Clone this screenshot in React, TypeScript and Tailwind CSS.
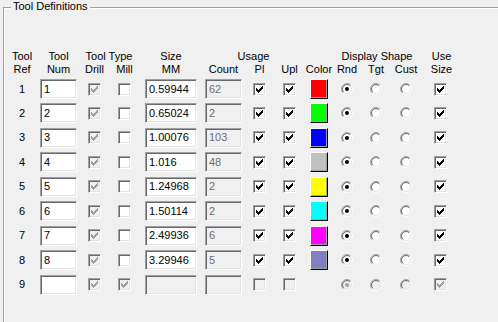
import React from "react";

// Win classic "Tool Definitions" group box

type Tool = {
  ref: number;
  num: string;
  size: string;
  count: string;
  color: string | null;
};

const tools: Tool[] = [
  { ref: 1, num: "1", size: "0.59944", count: "62", color: "#ff0000" },
  { ref: 2, num: "2", size: "0.65024", count: "2", color: "#00ff00" },
  { ref: 3, num: "3", size: "1.00076", count: "103", color: "#0000ff" },
  { ref: 4, num: "4", size: "1.016", count: "48", color: "#c0c0c0" },
  { ref: 5, num: "5", size: "1.24968", count: "2", color: "#ffff00" },
  { ref: 6, num: "6", size: "1.50114", count: "2", color: "#00ffff" },
  { ref: 7, num: "7", size: "2.49936", count: "6", color: "#ff00ff" },
  { ref: 8, num: "8", size: "3.29946", count: "5", color: "#8080c0" },
  { ref: 9, num: "", size: "", count: "", color: null },
];

// column widths in px, measured from the group's inner left edge
const cols = "grid-cols-[36px_37px_35px_25px_68px_37px_35px_25px_34px_22px_36px_24px_44px]";

const sunken =
  "border border-[#a0a0a0] border-b-white border-r-white shadow-[inset_1px_1px_0_#696969,inset_-1px_-1px_0_#e3e3e3]";

function TextBox({
  value,
  width,
  disabled,
}: {
  value: string;
  width: string;
  disabled?: boolean;
}) {
  return (
    <div
      className={`${width} h-[20px] ${sunken} ${
        disabled ? "bg-[#f0f0f0] text-[#6d6d6d]" : "bg-white text-black"
      } flex items-center pl-[3px] leading-[13px]`}
    >
      {value}
    </div>
  );
}

// pixel runs of the classic 7x7 check glyph: [row, start, length]
const checkRuns: [number, number, number][] = [
  [0, 6, 1],
  [1, 5, 2],
  [2, 0, 1],
  [2, 4, 3],
  [3, 0, 2],
  [3, 3, 3],
  [4, 0, 5],
  [5, 1, 3],
  [6, 2, 1],
];

function CheckBox({ checked, disabled }: { checked: boolean; disabled?: boolean }) {
  return (
    <div
      className={`w-[13px] h-[13px] ${sunken} ${
        disabled ? "bg-[#f0f0f0]" : "bg-white"
      } flex items-center justify-center`}
    >
      {checked && (
        <svg width="7" height="7" viewBox="0 0 7 7" shapeRendering="crispEdges">
          {checkRuns.map(([y, x, w], i) => (
            <rect key={i} x={x} y={y} width={w} height={1} fill={disabled ? "#a0a0a0" : "#000"} />
          ))}
        </svg>
      )}
    </div>
  );
}

function arc(r: number, from: "tl" | "br") {
  const d = r * 0.7071;
  const bl = `${6 - d} ${6 + d}`;
  const tr = `${6 + d} ${6 - d}`;
  return from === "tl" ? `M${bl} A${r} ${r} 0 0 1 ${tr}` : `M${tr} A${r} ${r} 0 0 1 ${bl}`;
}

function Radio({ selected, disabled }: { selected: boolean; disabled?: boolean }) {
  return (
    <svg width="12" height="12" viewBox="0 0 12 12">
      <circle cx="6" cy="6" r="5" fill={disabled ? "#f0f0f0" : "#fff"} />
      <path d={arc(5.5, "tl")} stroke="#a0a0a0" fill="none" />
      <path d={arc(4.5, "tl")} stroke="#696969" fill="none" />
      <path d={arc(5.5, "br")} stroke="#fff" fill="none" />
      <path d={arc(4.5, "br")} stroke="#e3e3e3" fill="none" />
      {selected && <circle cx="6" cy="6" r="2" fill={disabled ? "#a0a0a0" : "#000"} />}
    </svg>
  );
}

function Swatch({ color }: { color: string }) {
  return (
    <div
      className="w-[18px] h-[20px] border border-white border-b-black border-r-black shadow-[inset_-1px_-1px_0_#a0a0a0]"
      style={{ backgroundColor: color }}
    />
  );
}

export default function App() {
  return (
    <div
      className="w-[498px] h-[322px] overflow-hidden bg-[#f0f0f0] pt-[7px] pl-[3px] text-[11px] leading-[13px] text-black"
      style={{ fontFamily: '"Liberation Sans", Arial, sans-serif' }}
    >
      <div className="relative w-[540px] h-[360px] border border-[#a0a0a0] shadow-[inset_1px_1px_0_#fff]">
        <span className="absolute -top-[8px] left-[7px] px-[2px] bg-[#f0f0f0]">Tool Definitions</span>

        {/* column headers */}
        <div className={`grid ${cols} mt-[42px] text-center`}>
          <span>Tool</span>
          <span>Tool</span>
          <span className="col-span-2 pl-[4px]">Tool Type</span>
          <span>Size</span>
          <span className="col-span-3">Usage</span>
          <span />
          <span className="col-span-3">Display Shape</span>
          <span className="pl-[3px]">Use</span>

          <span>Ref</span>
          <span>Num</span>
          <span>Drill</span>
          <span>Mill</span>
          <span>MM</span>
          <span>Count</span>
          <span>Pl</span>
          <span>Upl</span>
          <span>Color</span>
          <span>Rnd</span>
          <span>Tgt</span>
          <span>Cust</span>
          <span className="pl-[3px]">Size</span>
        </div>

        {/* tool rows */}
        <div className={`grid ${cols} auto-rows-[20px] gap-y-[4.45px] mt-[3px] items-center justify-items-center`}>
          {tools.map((t) => {
            const empty = t.color === null;
            return (
              <React.Fragment key={t.ref}>
                <span>{t.ref}</span>
                <TextBox value={t.num} width="w-[37px]" />
                <CheckBox checked disabled />
                <CheckBox checked={empty} disabled={empty} />
                <TextBox value={t.size} width="w-[52px]" disabled={empty} />
                <TextBox value={t.count} width="w-[37px]" disabled />
                <CheckBox checked={!empty} disabled={empty} />
                <CheckBox checked={!empty} disabled={empty} />
                {t.color ? <Swatch color={t.color} /> : <span />}
                <Radio selected disabled={empty} />
                <Radio selected={false} disabled={empty} />
                <Radio selected={false} disabled={empty} />
                <CheckBox checked disabled={empty} />
              </React.Fragment>
            );
          })}
        </div>
      </div>
    </div>
  );
}
